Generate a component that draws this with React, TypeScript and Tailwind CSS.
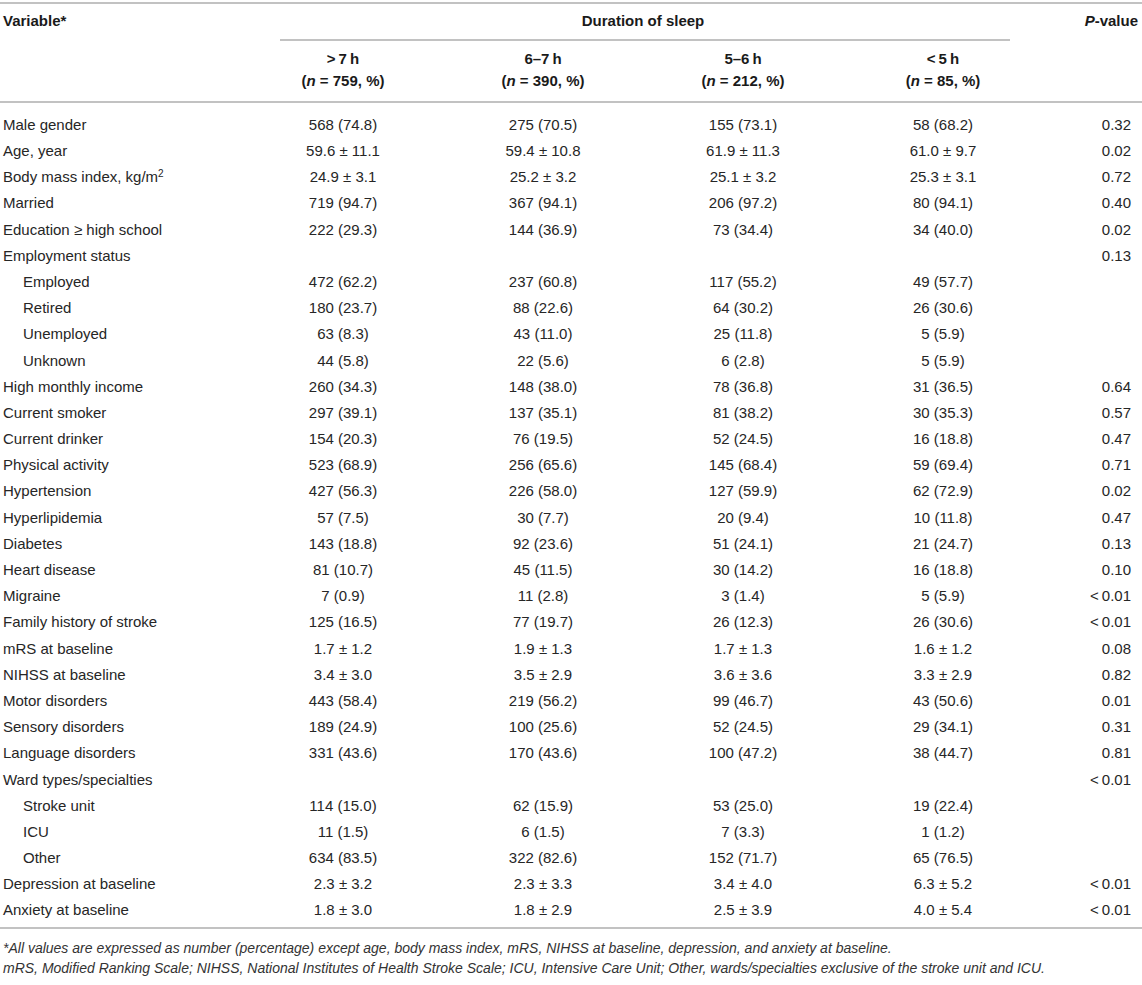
import React from "react";

type Row = {
  label: React.ReactNode;
  values: string[];
  p: string;
  indent?: boolean;
};

const T = "\u2009";

const pm = (a: string, b: string) => `${a} ± ${b}`;
const lt = (v: string) => `<${T}${v}`;

const rows: Row[] = [
  { label: "Male gender", values: ["568 (74.8)", "275 (70.5)", "155 (73.1)", "58 (68.2)"], p: "0.32" },
  { label: "Age, year", values: [pm("59.6", "11.1"), pm("59.4", "10.8"), pm("61.9", "11.3"), pm("61.0", "9.7")], p: "0.02" },
  {
    label: (
      <>
        Body mass index, kg/m<sup className="text-[10px] leading-none">2</sup>
      </>
    ),
    values: [pm("24.9", "3.1"), pm("25.2", "3.2"), pm("25.1", "3.2"), pm("25.3", "3.1")],
    p: "0.72",
  },
  { label: "Married", values: ["719 (94.7)", "367 (94.1)", "206 (97.2)", "80 (94.1)"], p: "0.40" },
  { label: "Education ≥ high school", values: ["222 (29.3)", "144 (36.9)", "73 (34.4)", "34 (40.0)"], p: "0.02" },
  { label: "Employment status", values: ["", "", "", ""], p: "0.13" },
  { label: "Employed", values: ["472 (62.2)", "237 (60.8)", "117 (55.2)", "49 (57.7)"], p: "", indent: true },
  { label: "Retired", values: ["180 (23.7)", "88 (22.6)", "64 (30.2)", "26 (30.6)"], p: "", indent: true },
  { label: "Unemployed", values: ["63 (8.3)", "43 (11.0)", "25 (11.8)", "5 (5.9)"], p: "", indent: true },
  { label: "Unknown", values: ["44 (5.8)", "22 (5.6)", "6 (2.8)", "5 (5.9)"], p: "", indent: true },
  { label: "High monthly income", values: ["260 (34.3)", "148 (38.0)", "78 (36.8)", "31 (36.5)"], p: "0.64" },
  { label: "Current smoker", values: ["297 (39.1)", "137 (35.1)", "81 (38.2)", "30 (35.3)"], p: "0.57" },
  { label: "Current drinker", values: ["154 (20.3)", "76 (19.5)", "52 (24.5)", "16 (18.8)"], p: "0.47" },
  { label: "Physical activity", values: ["523 (68.9)", "256 (65.6)", "145 (68.4)", "59 (69.4)"], p: "0.71" },
  { label: "Hypertension", values: ["427 (56.3)", "226 (58.0)", "127 (59.9)", "62 (72.9)"], p: "0.02" },
  { label: "Hyperlipidemia", values: ["57 (7.5)", "30 (7.7)", "20 (9.4)", "10 (11.8)"], p: "0.47" },
  { label: "Diabetes", values: ["143 (18.8)", "92 (23.6)", "51 (24.1)", "21 (24.7)"], p: "0.13" },
  { label: "Heart disease", values: ["81 (10.7)", "45 (11.5)", "30 (14.2)", "16 (18.8)"], p: "0.10" },
  { label: "Migraine", values: ["7 (0.9)", "11 (2.8)", "3 (1.4)", "5 (5.9)"], p: lt("0.01") },
  { label: "Family history of stroke", values: ["125 (16.5)", "77 (19.7)", "26 (12.3)", "26 (30.6)"], p: lt("0.01") },
  { label: "mRS at baseline", values: [pm("1.7", "1.2"), pm("1.9", "1.3"), pm("1.7", "1.3"), pm("1.6", "1.2")], p: "0.08" },
  { label: "NIHSS at baseline", values: [pm("3.4", "3.0"), pm("3.5", "2.9"), pm("3.6", "3.6"), pm("3.3", "2.9")], p: "0.82" },
  { label: "Motor disorders", values: ["443 (58.4)", "219 (56.2)", "99 (46.7)", "43 (50.6)"], p: "0.01" },
  { label: "Sensory disorders", values: ["189 (24.9)", "100 (25.6)", "52 (24.5)", "29 (34.1)"], p: "0.31" },
  { label: "Language disorders", values: ["331 (43.6)", "170 (43.6)", "100 (47.2)", "38 (44.7)"], p: "0.81" },
  { label: "Ward types/specialties", values: ["", "", "", ""], p: lt("0.01") },
  { label: "Stroke unit", values: ["114 (15.0)", "62 (15.9)", "53 (25.0)", "19 (22.4)"], p: "", indent: true },
  { label: "ICU", values: ["11 (1.5)", "6 (1.5)", "7 (3.3)", "1 (1.2)"], p: "", indent: true },
  { label: "Other", values: ["634 (83.5)", "322 (82.6)", "152 (71.7)", "65 (76.5)"], p: "", indent: true },
  { label: "Depression at baseline", values: [pm("2.3", "3.2"), pm("2.3", "3.3"), pm("3.4", "4.0"), pm("6.3", "5.2")], p: lt("0.01") },
  { label: "Anxiety at baseline", values: [pm("1.8", "3.0"), pm("1.8", "2.9"), pm("2.5", "3.9"), pm("4.0", "5.4")], p: lt("0.01") },
];

const groups = [
  { range: `>${T}7${T}h`, n: "759" },
  { range: `6–7${T}h`, n: "390" },
  { range: `5–6${T}h`, n: "212" },
  { range: `<${T}5${T}h`, n: "85" },
];

const cols = "grid grid-cols-[243px_200px_200px_200px_200px_1fr]";

const Rule = () => <div className="h-[2px] bg-[#c2c2c2]" />;

export default function App() {
  return (
    <div className="w-[1142px] bg-white pt-[2px] font-['Liberation_Sans',Arial,sans-serif] text-[15px] text-[#262626]">
      <Rule />
      <div className={`${cols} h-[35px] items-center font-bold text-[#1a1a1a]`}>
        <div className="pl-[3px]">Variable*</div>
        <div className="col-span-4 text-center">Duration of sleep</div>
        <div className="pr-[4px] text-right">
          <i>P</i>-value
        </div>
      </div>
      <div className="ml-[280px] h-[2px] w-[730px] bg-[#c2c2c2]" />
      <div className={`${cols} pb-[9px] pt-[7px] font-bold leading-[22px] text-[#1a1a1a]`}>
        <div />
        {groups.map((g) => (
          <div key={g.n} className="text-center">
            <div>{g.range}</div>
            <div>
              (<i>n</i> = {g.n}, %)
            </div>
          </div>
        ))}
        <div />
      </div>
      <Rule />
      <div className="pb-[3px] pt-[9px]">
        {rows.map((r, i) => (
          <div key={i} className={`${cols} h-[26.2px] items-center`}>
            <div className={r.indent ? "pl-[23px]" : "pl-[3px]"}>{r.label}</div>
            {r.values.map((v, j) => (
              <div key={j} className="text-center">
                {v}
              </div>
            ))}
            <div className="pr-[11px] text-right">{r.p}</div>
          </div>
        ))}
      </div>
      <Rule />
      <div className="pl-[3px] pt-[9px] text-[14px] italic leading-[20px] text-[#333]">
        <div>
          *All values are expressed as number (percentage) except age, body mass index, mRS, NIHSS at baseline,
          depression, and anxiety at baseline.
        </div>
        <div>
          mRS, Modified Ranking Scale; NIHSS, National Institutes of Health Stroke Scale; ICU, Intensive Care Unit;
          Other, wards/specialties exclusive of the stroke unit and ICU.
        </div>
      </div>
    </div>
  );
}
